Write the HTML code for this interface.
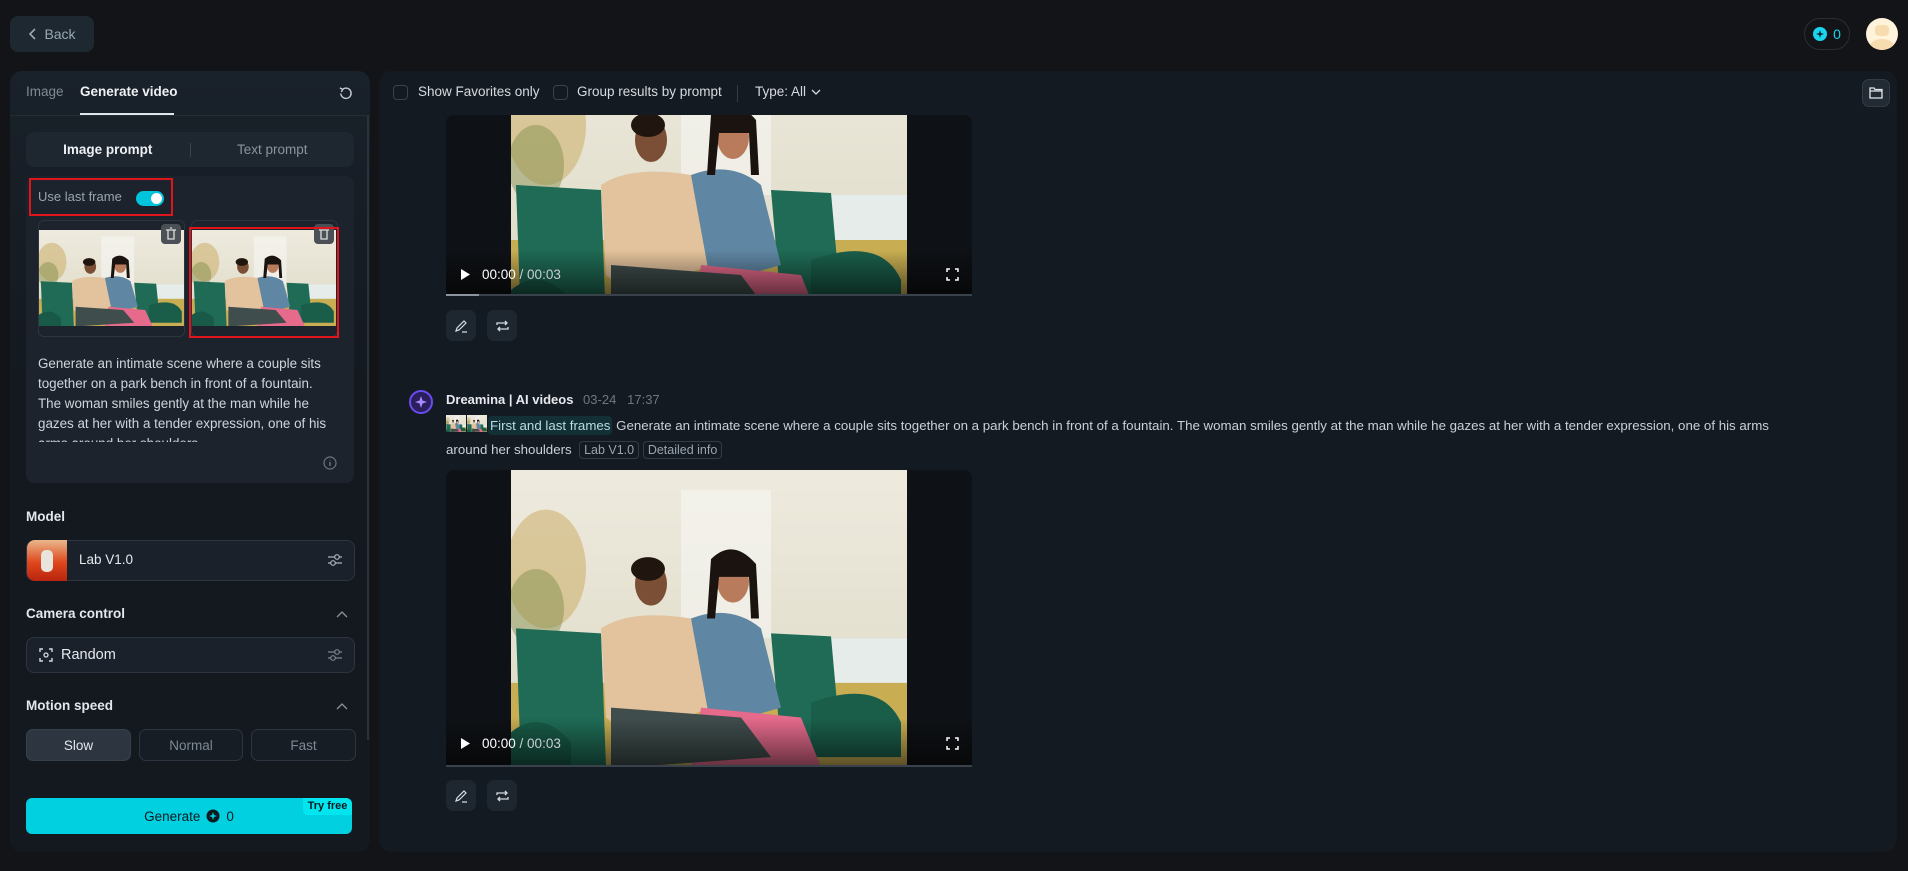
<!DOCTYPE html>
<html><head><meta charset="utf-8"><style>
*{box-sizing:border-box;margin:0;padding:0}
body{width:1908px;height:871px;background:#121418;font-family:"Liberation Sans",sans-serif;color:#e6e9ee;position:relative;overflow:hidden;font-size:14px}
.abs{position:absolute}
.back{left:10px;top:16px;width:84px;height:36px;border-radius:8px;background:#1e2830;color:#98a8b4;font-size:14px;display:flex;align-items:center;justify-content:center;gap:6px}
.pill{left:1804px;top:18px;width:46px;height:32px;border-radius:16px;border:1px solid #2a2f36;display:flex;align-items:center;justify-content:center;gap:6px;color:#1ad5f0;font-size:14px}
.avatar{left:1866px;top:18px;width:32px;height:32px;border-radius:50%;background:#fff3dc;overflow:hidden}
.lp{left:10px;top:71px;width:360px;height:781px;border-radius:12px;background:linear-gradient(180deg,#19212a,#141920 40%,#141920)}
.rp{left:379px;top:71px;width:1518px;height:781px;border-radius:12px;background:#141a21}
.tab{font-size:13.5px;top:84px}
.seg{left:26px;top:132px;width:328px;height:35px;border-radius:8px;background:#1e2630;display:flex;align-items:center}
.seg div{flex:1;text-align:center;font-size:13.5px}
.card{left:26px;top:176px;width:328px;height:307px;border-radius:8px;background:#1c232c}
.txt{left:38px;top:354px;width:298px;font-size:13.4px;line-height:20px;color:#cfd5dc;height:88px;overflow:hidden}
.lbl{font-size:13.5px;font-weight:bold;color:#e3e7ec}
.box{left:26px;width:329px;border:1px solid #2d3540;border-radius:8px;background:#1a212a}
.sp{top:729px;height:32px;border:1px solid #2d3540;border-radius:7px;font-size:13.5px;display:flex;align-items:center;justify-content:center;color:#7d8893;background:#171d25}
.gen{left:26px;top:798px;width:326px;height:36px;border-radius:6px;background:#00d0e0;color:#0d1a22;font-size:13.5px;display:flex;align-items:center;justify-content:center;gap:6px}
.cb{width:15px;height:15px;border:1px solid #3a424c;border-radius:4px;top:85px}
.tb{font-size:13.5px;color:#d6dbe1;top:84px}
.vid{left:446px;width:526px;background:#0e1115;border-radius:8px;overflow:hidden}
.ibtn{width:30px;height:31px;border-radius:7px;background:#1e262f;display:flex;align-items:center;justify-content:center}
.chip{border:1px solid #333b45;border-radius:4px;padding:1px 4px;font-size:12.5px;color:#9aa4ae}
</style></head><body>
<svg width="0" height="0" style="position:absolute"><defs>
<linearGradient id="sky" x1="0" y1="0" x2="0" y2="1"><stop offset="0" stop-color="#eeeade"/><stop offset=".6" stop-color="#e3e0cf"/><stop offset="1" stop-color="#d9d6c0"/></linearGradient>
<symbol id="scene" viewBox="0 0 396 300" preserveAspectRatio="none">
<rect width="396" height="300" fill="url(#sky)"/>
<ellipse cx="35" cy="100" rx="40" ry="60" fill="#c6a24f" opacity=".45"/>
<ellipse cx="25" cy="140" rx="28" ry="40" fill="#7c8a45" opacity=".45"/>
<rect x="170" y="20" width="90" height="150" fill="#f7f7f3" opacity=".6"/>
<rect x="270" y="170" width="126" height="55" fill="#e6ecea"/>
<rect x="0" y="215" width="396" height="85" fill="#c8ad52"/>
<path d="M5 160 L90 165 L95 300 L10 300Z" fill="#1f6b55"/>
<path d="M260 165 L320 168 L330 280 L270 280Z" fill="#1f6b55"/>
<path d="M0 265 Q30 240 60 275 L60 300 L0 300Z" fill="#185a47"/>
<path d="M300 235 Q370 210 390 255 L390 290 L300 290Z" fill="#1a5e4a"/>
<path d="M90 160 Q120 140 180 150 L200 240 L120 270 L95 250Z" fill="#e3c39d"/>
<ellipse cx="140" cy="115" rx="16" ry="22" fill="#7a4f36"/>
<ellipse cx="137" cy="100" rx="17" ry="12" fill="#20160f"/>
<path d="M180 150 Q220 135 250 160 L270 240 L200 260Z" fill="#5f86a3"/>
<ellipse cx="222" cy="112" rx="16" ry="22" fill="#b87c5c"/>
<path d="M200 90 Q222 68 245 95 L248 150 L240 150 L238 108 L208 108 L204 150 L196 150Z" fill="#1a1310"/>
<path d="M190 240 L290 250 L310 300 L180 300Z" fill="#e56a8c"/>
<path d="M100 240 L230 250 L260 290 L120 300 L100 300Z" fill="#3f4d4c"/>
</symbol></defs></svg>

<div class="abs back"><svg width="10" height="12" viewBox="0 0 10 12"><path d="M7 1 L2 6 L7 11" stroke="#98a8b4" stroke-width="1.6" fill="none"/></svg>Back</div>
<div class="abs pill"><svg width="14" height="14" viewBox="0 0 14 14"><circle cx="7" cy="7" r="7" fill="#1ad5f0"/><path d="M7 3 L8 6 L11 7 L8 8 L7 11 L6 8 L3 7 L6 6Z" fill="#0d2a33"/></svg>0</div>
<div class="abs avatar"><svg width="32" height="32"><rect x="9" y="7" width="14" height="11" rx="4" fill="#f7dcb0"/><ellipse cx="16" cy="30" rx="13" ry="9" fill="#f7dcb0"/></svg></div>

<div class="abs lp"></div>
<div class="abs tab" style="left:26px;color:#7f8a95">Image</div>
<div class="abs tab" style="left:80px;color:#eef1f4;font-weight:bold">Generate video</div>
<div class="abs" style="left:80px;top:113px;width:94px;height:2px;background:#dfe7ee"></div>
<div class="abs" style="left:10px;top:115px;width:360px;height:1px;background:#252c35"></div>
<div class="abs" style="left:367px;top:116px;width:2px;height:624px;background:#2a323c"></div>
<svg class="abs" style="left:338px;top:86px" width="15" height="15" viewBox="0 0 16 16"><path d="M3 8 A5.5 5.5 0 1 0 5 3.5" stroke="#c5ccd3" stroke-width="1.5" fill="none"/><path d="M2 2 L5 3.6 L3.6 6.5" stroke="#c5ccd3" stroke-width="1.5" fill="none"/></svg>
<div class="abs seg"><div style="color:#eef1f4;font-weight:bold">Image prompt</div><span style="width:1px;height:14px;background:#3a424c"></span><div style="color:#8a949e">Text prompt</div></div>
<div class="abs card"></div>
<div class="abs" style="left:29px;top:178px;width:144px;height:38px;border:2px solid #e0141b"></div>
<div class="abs" style="left:38px;top:189px;font-size:13px;color:#9aa4ae">Use last frame</div>
<div class="abs" style="left:136px;top:191px;width:28px;height:15px;border-radius:8px;background:#00c4dc"><div style="position:absolute;right:2px;top:2px;width:11px;height:11px;border-radius:50%;background:#fff"></div></div>
<div class="abs" style="left:38px;top:220px;width:147px;height:117px;border:1px solid #2d3540;border-radius:6px"></div>
<div class="abs" style="left:191px;top:220px;width:147px;height:117px;border:1px solid #2d3540;border-radius:6px"></div>
<svg class="abs" style="left:39px;top:230px" width="145" height="96"><use href="#scene" width="145" height="96"/></svg>
<svg class="abs" style="left:192px;top:230px" width="144" height="96"><use href="#scene" width="144" height="96"/></svg>
<div class="abs" style="left:161px;top:224px;width:20px;height:20px;border-radius:4px;background:#4b5056"></div>
<div class="abs" style="left:314px;top:224px;width:20px;height:20px;border-radius:4px;background:#4b5056"></div>
<svg class="abs" style="left:165px;top:227px" width="12" height="13"><path d="M1 3 H11 M3 3 V12 H9 V3 M5 1 H7" stroke="#ddd" stroke-width="1.3" fill="none"/></svg>
<svg class="abs" style="left:318px;top:227px" width="12" height="13"><path d="M1 3 H11 M3 3 V12 H9 V3 M5 1 H7" stroke="#ddd" stroke-width="1.3" fill="none"/></svg>
<div class="abs" style="left:189px;top:227px;width:150px;height:111px;border:2px solid #e0141b"></div>
<div class="abs txt">Generate an intimate scene where a couple sits together on a park bench in front of a fountain. The woman smiles gently at the man while he gazes at her with a tender expression, one of his arms around her shoulders</div>
<svg class="abs" style="left:323px;top:456px" width="14" height="14"><circle cx="7" cy="7" r="6" stroke="#6b757f" stroke-width="1.2" fill="none"/><path d="M7 6 V10 M7 4 V4.5" stroke="#6b757f" stroke-width="1.4"/></svg>

<div class="abs lbl" style="left:26px;top:509px">Model</div>
<div class="abs box" style="top:540px;height:41px"></div>
<div class="abs" style="left:27px;top:540px;width:40px;height:41px;border-radius:8px 0 0 8px;background:linear-gradient(180deg,#e9b88c,#e0471c 55%,#b8240f)"><div style="position:absolute;left:14px;top:10px;width:12px;height:22px;border-radius:5px;background:#e9e4dc"></div></div>
<div class="abs" style="left:79px;top:552px;font-size:13.5px">Lab V1.0</div>
<svg class="abs" style="left:327px;top:552px" width="16" height="16"><path d="M1 5 H15 M1 11 H15" stroke="#aab2ba" stroke-width="1.3"/><circle cx="10" cy="5" r="2.3" fill="#1a212a" stroke="#aab2ba" stroke-width="1.2"/><circle cx="6" cy="11" r="2.3" fill="#1a212a" stroke="#aab2ba" stroke-width="1.2"/></svg>
<div class="abs lbl" style="left:26px;top:606px">Camera control</div>
<svg class="abs" style="left:336px;top:610px" width="12" height="8"><path d="M1 7 L6 2 L11 7" stroke="#8a949e" stroke-width="1.3" fill="none"/></svg>
<div class="abs box" style="top:637px;height:36px"></div>
<svg class="abs" style="left:39px;top:648px" width="14" height="14"><path d="M1 4 V1 H4 M10 1 H13 V4 M13 10 V13 H10 M4 13 H1 V10" stroke="#d5dbe1" stroke-width="1.4" fill="none"/><circle cx="7" cy="7" r="2" stroke="#d5dbe1" stroke-width="1.3" fill="none"/></svg>
<div class="abs" style="left:61px;top:647px;font-size:14.5px">Random</div>
<svg class="abs" style="left:327px;top:647px" width="16" height="16"><path d="M1 5 H15 M1 11 H15" stroke="#7a848e" stroke-width="1.3"/><circle cx="10" cy="5" r="2.3" fill="#1a212a" stroke="#7a848e" stroke-width="1.2"/><circle cx="6" cy="11" r="2.3" fill="#1a212a" stroke="#7a848e" stroke-width="1.2"/></svg>
<div class="abs lbl" style="left:26px;top:698px">Motion speed</div>
<svg class="abs" style="left:336px;top:702px" width="12" height="8"><path d="M1 7 L6 2 L11 7" stroke="#8a949e" stroke-width="1.3" fill="none"/></svg>
<div class="abs sp" style="left:26px;width:105px;background:#2c3540;color:#e3e7ec;border-color:#36404b">Slow</div>
<div class="abs sp" style="left:139px;width:104px">Normal</div>
<div class="abs sp" style="left:251px;width:105px">Fast</div>
<div class="abs gen">Generate <svg width="14" height="14"><circle cx="7" cy="7" r="6.5" fill="#0d1a22"/><path d="M7 3 L8 6 L11 7 L8 8 L7 11 L6 8 L3 7 L6 6Z" fill="#00d0e0"/></svg>0</div>
<div class="abs" style="left:303px;top:798px;width:49px;height:17px;background:#00e6ee;border-radius:0 6px 0 4px;font-size:11px;font-weight:bold;color:#0b1a20;text-align:center;line-height:17px">Try free</div>

<div class="abs rp"></div>
<div class="abs cb" style="left:393px"></div><div class="abs tb" style="left:418px">Show Favorites only</div>
<div class="abs cb" style="left:553px"></div><div class="abs tb" style="left:577px">Group results by prompt</div>
<div class="abs" style="left:737px;top:85px;width:1px;height:17px;background:#333b45"></div>
<div class="abs tb" style="left:755px">Type: All</div>
<svg class="abs" style="left:811px;top:88px" width="10" height="8"><path d="M1 2 L5 6 L9 2" stroke="#d6dbe1" stroke-width="1.3" fill="none"/></svg>
<div class="abs" style="left:1862px;top:79px;width:28px;height:28px;border-radius:7px;background:#222a33;border:1px solid #333b45"></div>
<svg class="abs" style="left:1869px;top:86px" width="14" height="13"><path d="M1 2 H5 L6 3.5 H13 V12 H1Z M1 5 H13" stroke="#e3e7ec" stroke-width="1.3" fill="none"/></svg>

<div class="abs vid" style="top:115px;height:181px"></div>
<svg class="abs" style="left:511px;top:115px" width="396" height="181" viewBox="0 0 396 181" preserveAspectRatio="none"><use href="#scene" x="0" y="-90" width="396" height="300"/></svg>
<div class="abs" style="left:446px;top:250px;width:526px;height:44px;background:linear-gradient(180deg,transparent,rgba(0,0,0,.55))"></div>
<div class="abs" style="left:446px;top:294px;width:526px;height:2px;background:#39414a"><div style="width:33px;height:2px;background:#8c959e"></div></div>
<svg class="abs" style="left:460px;top:268px" width="11" height="13"><path d="M1 1 L10 6.5 L1 12Z" fill="#fff"/></svg>
<div class="abs" style="left:482px;top:267px;font-size:13.5px;color:#fff">00:00 <span style="color:#c8ced4">/ 00:03</span></div>
<svg class="abs" style="left:946px;top:268px" width="13" height="13"><path d="M1 4 V1 H4 M9 1 H12 V4 M12 9 V12 H9 M4 12 H1 V9" stroke="#fff" stroke-width="1.5" fill="none"/></svg>
<div class="abs ibtn" style="left:446px;top:310px"><svg width="14" height="14"><path d="M2 12 L3 9 L10 2 L12 4 L5 11Z M8 13 H13" stroke="#d6dbe1" stroke-width="1.2" fill="none"/></svg></div>
<div class="abs ibtn" style="left:487px;top:310px"><svg width="15" height="14"><path d="M2 6 V4 H12 M10 2 L12 4 L10 6 M13 8 V10 H3 M5 12 L3 10 L5 8" stroke="#d6dbe1" stroke-width="1.3" fill="none"/></svg></div>

<svg class="abs" style="left:409px;top:390px" width="24" height="24"><circle cx="12" cy="12" r="11" fill="#2a1f5c" stroke="#6a4cf0" stroke-width="2"/><path d="M12 6 L13.5 10.5 L18 12 L13.5 13.5 L12 18 L10.5 13.5 L6 12 L10.5 10.5Z" fill="#a88bff"/></svg>
<div class="abs" style="left:446px;top:392px;font-size:13px;font-weight:bold;color:#e6e9ee">Dreamina | AI videos <span style="font-weight:normal;color:#6d7781;margin-left:6px">03-24 &nbsp; 17:37</span></div>
<svg class="abs" style="left:446px;top:415px" width="20" height="17"><use href="#scene" width="20" height="17"/></svg>
<svg class="abs" style="left:467px;top:415px" width="20" height="17"><use href="#scene" width="20" height="17"/></svg>
<div class="abs" style="left:446px;top:414px;width:1460px;font-size:13.3px;line-height:24px;color:#c9d0d7"><span style="display:inline-block;width:42px"></span><span style="background:#123036;color:#b6dde3;border-radius:4px;padding:2px 2px">First and last frames</span> Generate an intimate scene where a couple sits together on a park bench in front of a fountain. The woman smiles gently at the man while he gazes at her with a tender expression, one of his arms<br>around her shoulders &nbsp;<span class="chip">Lab V1.0</span> <span class="chip">Detailed info</span></div>

<div class="abs vid" style="top:470px;height:297px"></div>
<svg class="abs" style="left:511px;top:470px" width="396" height="297" viewBox="0 0 396 300" preserveAspectRatio="none"><use href="#scene" width="396" height="300"/></svg>
<div class="abs" style="left:446px;top:718px;width:526px;height:48px;background:linear-gradient(180deg,transparent,rgba(0,0,0,.55))"></div>
<div class="abs" style="left:446px;top:765px;width:526px;height:2px;background:#39414a"></div>
<svg class="abs" style="left:460px;top:737px" width="11" height="13"><path d="M1 1 L10 6.5 L1 12Z" fill="#fff"/></svg>
<div class="abs" style="left:482px;top:736px;font-size:13.5px;color:#fff">00:00 <span style="color:#c8ced4">/ 00:03</span></div>
<svg class="abs" style="left:946px;top:737px" width="13" height="13"><path d="M1 4 V1 H4 M9 1 H12 V4 M12 9 V12 H9 M4 12 H1 V9" stroke="#fff" stroke-width="1.5" fill="none"/></svg>
<div class="abs ibtn" style="left:446px;top:780px"><svg width="14" height="14"><path d="M2 12 L3 9 L10 2 L12 4 L5 11Z M8 13 H13" stroke="#d6dbe1" stroke-width="1.2" fill="none"/></svg></div>
<div class="abs ibtn" style="left:487px;top:780px"><svg width="15" height="14"><path d="M2 6 V4 H12 M10 2 L12 4 L10 6 M13 8 V10 H3 M5 12 L3 10 L5 8" stroke="#d6dbe1" stroke-width="1.3" fill="none"/></svg></div>
</body></html>
